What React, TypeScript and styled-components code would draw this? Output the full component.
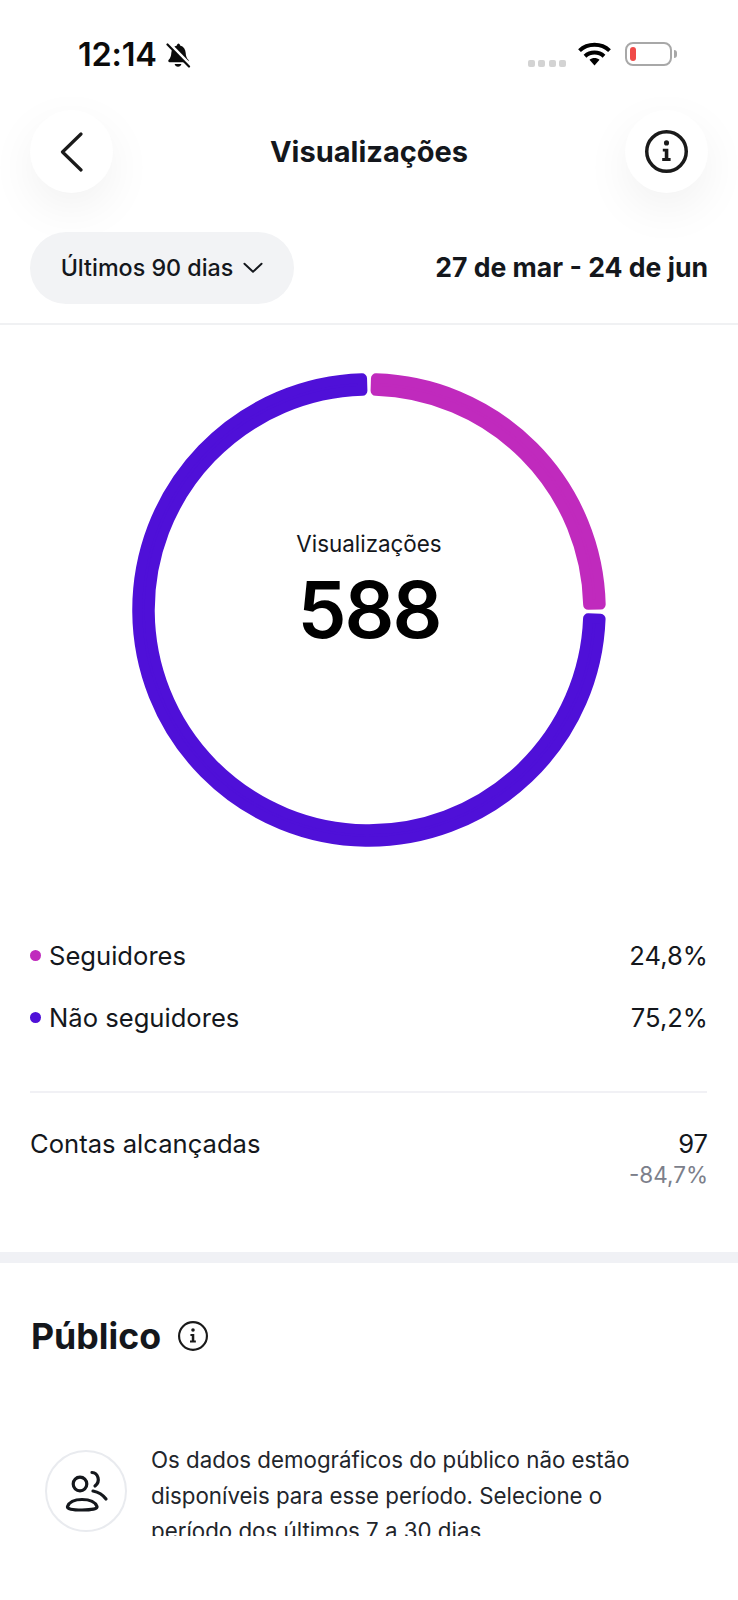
import React from "react";
import styled, { createGlobalStyle } from "styled-components";

const GlobalStyles = createGlobalStyle`
  * { box-sizing: border-box; }
  html, body { margin: 0; padding: 0; background: #fff; }
  body { font-family: Inter, "Liberation Sans", sans-serif; color: #14171c; }
`;

const Page = styled.div`
  width: 738px;
  height: 1600px;
  overflow: hidden;
  background: #fff;
`;

const StatusBar = styled.div`
  height: 110px;
  padding: 40px 66px 0 78px;
  display: flex;
  justify-content: space-between;
  align-items: flex-start;
`;

const StatusLeft = styled.div`
  display: flex;
  align-items: center;
  gap: 8px;
`;

const Clock = styled.span`
  font-size: 32.5px;
  line-height: 30px;
  font-weight: 600;
  color: #0b0b0b;
  letter-spacing: -0.2px;
`;

const StatusRight = styled.div`
  display: flex;
  align-items: flex-start;
  padding-top: 2px;
`;

const SignalDots = styled.div`
  display: flex;
  gap: 3.5px;
  margin-top: 18px;
  margin-right: 12px;
`;

const SignalDot = styled.span`
  width: 7px;
  height: 7px;
  border-radius: 2px;
  background: #d3d3d3;
`;

const Battery = styled.div`
  margin-left: 14px;
  width: 47px;
  height: 24px;
  border: 2px solid #a8a8a8;
  border-radius: 8px;
  padding: 3px;
  position: relative;
  &::after {
    content: "";
    position: absolute;
    right: -7px;
    top: 6px;
    width: 3px;
    height: 8px;
    border-radius: 0 3px 3px 0;
    background: #a8a8a8;
  }
`;

const BatteryLevel = styled.div`
  width: 6px;
  height: 100%;
  border-radius: 3px;
  background: #f04a48;
`;

const Header = styled.div`
  height: 83px;
  padding: 0 30px;
  display: flex;
  align-items: center;
  justify-content: space-between;
`;

const RoundButton = styled.button`
  width: 83px;
  height: 83px;
  border: 0;
  padding: 0;
  border-radius: 50%;
  background: #fff;
  box-shadow: 0 16px 48px rgba(0, 0, 0, 0.06);
  display: flex;
  align-items: center;
  justify-content: center;
`;

const Title = styled.h1`
  margin: 0;
  font-size: 29px;
  font-weight: 700;
  line-height: 34px;
  color: #14171c;
`;

const FilterRow = styled.div`
  margin-top: 39px;
  height: 72px;
  padding: 0 30px;
  display: flex;
  align-items: center;
  justify-content: space-between;
`;

const FilterPill = styled.div`
  width: 264px;
  height: 72px;
  padding-bottom: 1px;
  border-radius: 36px;
  background: #f2f3f5;
  display: flex;
  align-items: center;
  justify-content: center;
  gap: 10px;
  font-size: 23.3px;
  font-weight: 500;
  color: #14171c;
`;

const DateRange = styled.div`
  padding-bottom: 3px;
  font-size: 26.6px;
  font-weight: 700;
  color: #14171c;
`;

const Rule = styled.div`
  height: 2px;
  margin-top: 19px;
  background: #f0f1f3;
`;

const ChartArea = styled.div`
  padding-top: 48px;
  display: grid;
  justify-items: center;
`;

const ChartStack = styled.div`
  display: grid;
  width: 474px;
  height: 474px;
  & > * { grid-area: 1 / 1; }
`;

const ChartCenter = styled.div`
  display: flex;
  flex-direction: column;
  align-items: center;
  padding-top: 156px;
`;

const ChartLabel = styled.div`
  font-size: 22.4px;
  line-height: 30px;
  color: #14171c;
`;

const ChartValue = styled.div`
  margin-top: 9px;
  font-size: 78px;
  line-height: 84px;
  font-weight: 600;
  color: #000;
  letter-spacing: -2px;
`;

const Legend = styled.div`
  margin-top: 77px;
  padding: 0 30px 0 30px;
`;

const LegendRow = styled.div`
  height: 62px;
  display: flex;
  align-items: center;
  font-size: 25.6px;
  color: #14171c;
`;

const Dot = styled.span<{ $color: string }>`
  width: 11px;
  height: 11px;
  border-radius: 50%;
  margin-right: 8px;
  background: ${(props) => props.$color};
`;

const RowValue = styled.span`
  margin-left: auto;
`;

const ThinRule = styled.div`
  height: 2px;
  margin: 43px 31px 0 30px;
  background: #f1f1f5;
`;

const ReachRow = styled.div`
  padding: 34px 30px 0 30px;
  height: 159px;
  display: flex;
  justify-content: space-between;
  font-size: 25.6px;
  line-height: 34px;
  color: #14171c;
`;

const ReachValues = styled.div`
  text-align: right;
`;

const ReachDelta = styled.div`
  font-size: 22.5px;
  line-height: 27px;
  color: #7c7f8b;
`;

const Band = styled.div`
  height: 11px;
  background: #f0f1f5;
`;

const SectionTitle = styled.div`
  margin-top: 52px;
  height: 42px;
  padding-left: 31px;
  display: flex;
  align-items: center;
  gap: 17px;
`;

const SectionName = styled.h2`
  margin: 0;
  font-size: 35.7px;
  line-height: 42px;
  font-weight: 700;
  color: #14171c;
`;

const Notice = styled.div`
  margin-top: 85px;
  padding-left: 45px;
  display: flex;
  align-items: flex-start;
  gap: 24px;
`;

const NoticeIcon = styled.div`
  flex: none;
  width: 82px;
  height: 82px;
  margin-top: 8px;
  border: 2px solid #e9ebef;
  border-radius: 50%;
  display: flex;
  align-items: center;
  justify-content: center;
`;

const NoticeText = styled.p`
  margin: 0;
  width: 510px;
  height: 94px;
  overflow: hidden;
  font-size: 22.3px;
  line-height: 35.5px;
  color: #22252b;
`;

const CX = 237;
const CY = 237;
const R_MID = 225.5;
const BAND = 22.5;
const CORNER = 5;

const polar = (r: number, deg: number) => {
  const a = ((deg - 90) * Math.PI) / 180;
  return `${(CX + r * Math.cos(a)).toFixed(2)} ${(CY + r * Math.sin(a)).toFixed(2)}`;
};

// annular sector, inset by the corner radius and stroked with round joins
const sectorPath = (from: number, to: number) => {
  const outer = R_MID + BAND / 2 - CORNER;
  const inner = R_MID - BAND / 2 + CORNER;
  const inset = (CORNER / R_MID) * (180 / Math.PI);
  const a = from + inset;
  const b = to - inset;
  const large = b - a > 180 ? 1 : 0;
  return `M${polar(outer, a)} A${outer} ${outer} 0 ${large} 1 ${polar(outer, b)} L${polar(inner, b)} A${inner} ${inner} 0 ${large} 0 ${polar(inner, a)} Z`;
};

function Ring(): JSX.Element {
  const segments = [
    { from: 0.45, to: 89.9, color: "#c02abd" },
    { from: 90.9, to: 359.55, color: "#4f10d8" },
  ];
  return (
    <svg width="474" height="474" viewBox="0 0 474 474">
      {segments.map((s) => (
        <path
          key={s.color}
          d={sectorPath(s.from, s.to)}
          fill={s.color}
          stroke={s.color}
          strokeWidth={CORNER * 2}
          strokeLinejoin="round"
        />
      ))}
    </svg>
  );
}

function InfoIcon({ size, stroke }: { size: number; stroke: number }): JSX.Element {
  return (
    <svg width={size} height={size} viewBox="0 0 42 42">
      <circle cx="21" cy="21" r={21 - stroke / 2} fill="none" stroke="#1a1a1a" strokeWidth={stroke} />
      <circle cx="21" cy="12.6" r="2.5" fill="#1a1a1a" />
      <path
        d="M17.4 18.2h5.4v9.2h2.2v2.8h-8.2v-2.8h2.5v-6.4h-1.9z"
        fill="#1a1a1a"
      />
    </svg>
  );
}

function BellSlash(): JSX.Element {
  return (
    <svg width="26" height="26" viewBox="0 0 26 26">
      <path
        d="M13 1.500c1.200 0 2 .8 2.100 1.900 3.600.9 5.400 3.800 5.600 7.600.1 3 .9 5 2.600 6.800.9 1 .4 2.400-1 2.400H4.700c-1.400 0-1.900-1.400-1-2.400 1.700-1.800 2.500-3.800 2.600-6.800.2-3.800 2-6.700 5.600-7.600.1-1.100.9-1.900 2.100-1.900z"
        fill="#0b0b0b"
      />
      <path d="M9.600 22h6.800c-.3 1.600-1.700 2.800-3.400 2.800S9.900 23.600 9.600 22z" fill="#0b0b0b" />
      <path d="M3 .5L25.500 23.500" stroke="#fff" strokeWidth="3.500" />
      <path d="M2.500 2.500L24 24.500" stroke="#0b0b0b" strokeWidth="2.200" strokeLinecap="round" />
    </svg>
  );
}

function Wifi(): JSX.Element {
  return (
    <svg width="33" height="25" viewBox="0 0 33 25">
      <path d="M1.500 8.600C9.800 .8 23.200 .8 31.500 8.600" fill="none" stroke="#000" strokeWidth="4" />
      <path d="M7 14.200c5.200-4.900 13.800-4.900 19 0" fill="none" stroke="#000" strokeWidth="4" />
      <path d="M11.500 17.800c2.900-2.400 7.100-2.400 10 0L16.500 23.500z" fill="#000" />
    </svg>
  );
}

function PeopleIcon(): JSX.Element {
  return (
    <svg width="48" height="48" viewBox="0 0 48 48" fill="none" stroke="#14171c" strokeWidth="3.200" strokeLinecap="round">
      <circle cx="18" cy="17" r="6.800" />
      <path d="M5.500 39.500C7.500 34.500 13 32.500 20 32.500S33 34.500 35 39.500C35.500 42 30 43 20 43S5 42 5.500 39.500z" />
      <path d="M30 5.500C36 6 39 14 33 19" />
      <path d="M31 24C36 25 41 28 44 32" />
    </svg>
  );
}

function App(): JSX.Element {
  return (
    <Page>
      <GlobalStyles />
      <StatusBar>
        <StatusLeft>
          <Clock>12:14</Clock>
          <BellSlash />
        </StatusLeft>
        <StatusRight>
          <SignalDots>
            {[0, 1, 2, 3].map((i) => (
              <SignalDot key={i} />
            ))}
          </SignalDots>
          <Wifi />
          <Battery>
            <BatteryLevel />
          </Battery>
        </StatusRight>
      </StatusBar>

      <Header>
        <RoundButton aria-label="Voltar">
          <svg width="24" height="40" viewBox="0 0 24 40" fill="none" stroke="#1a1a1a" strokeWidth="3.200" strokeLinecap="round" strokeLinejoin="round">
            <path d="M21 2L2.500 20L21 38" />
          </svg>
        </RoundButton>
        <Title>Visualizações</Title>
        <RoundButton aria-label="Informações">
          <InfoIcon size={43} stroke={3.4} />
        </RoundButton>
      </Header>

      <FilterRow>
        <FilterPill>
          Últimos 90 dias
          <svg width="20" height="12" viewBox="0 0 21 12" fill="none" stroke="#14171c" strokeWidth="2" strokeLinecap="round" strokeLinejoin="round">
            <path d="M1.500 1.500L10.500 10L19.500 1.500" />
          </svg>
        </FilterPill>
        <DateRange>27 de mar - 24 de jun</DateRange>
      </FilterRow>
      <Rule />

      <ChartArea>
        <ChartStack>
          <Ring />
          <ChartCenter>
            <ChartLabel>Visualizações</ChartLabel>
            <ChartValue>588</ChartValue>
          </ChartCenter>
        </ChartStack>
      </ChartArea>

      <Legend>
        <LegendRow>
          <Dot $color="#c02abd" />
          Seguidores
          <RowValue>24,8%</RowValue>
        </LegendRow>
        <LegendRow>
          <Dot $color="#4f10d8" />
          Não seguidores
          <RowValue>75,2%</RowValue>
        </LegendRow>
      </Legend>
      <ThinRule />

      <ReachRow>
        <span>Contas alcançadas</span>
        <ReachValues>
          97
          <ReachDelta>-84,7%</ReachDelta>
        </ReachValues>
      </ReachRow>
      <Band />

      <SectionTitle>
        <SectionName>Público</SectionName>
        <InfoIcon size={30} stroke={3} />
      </SectionTitle>

      <Notice>
        <NoticeIcon>
          <PeopleIcon />
        </NoticeIcon>
        <NoticeText>
          Os dados demográficos do público não estão disponíveis para esse período. Selecione o período dos últimos 7 a 30 dias
        </NoticeText>
      </Notice>
    </Page>
  );
}

export default App;
